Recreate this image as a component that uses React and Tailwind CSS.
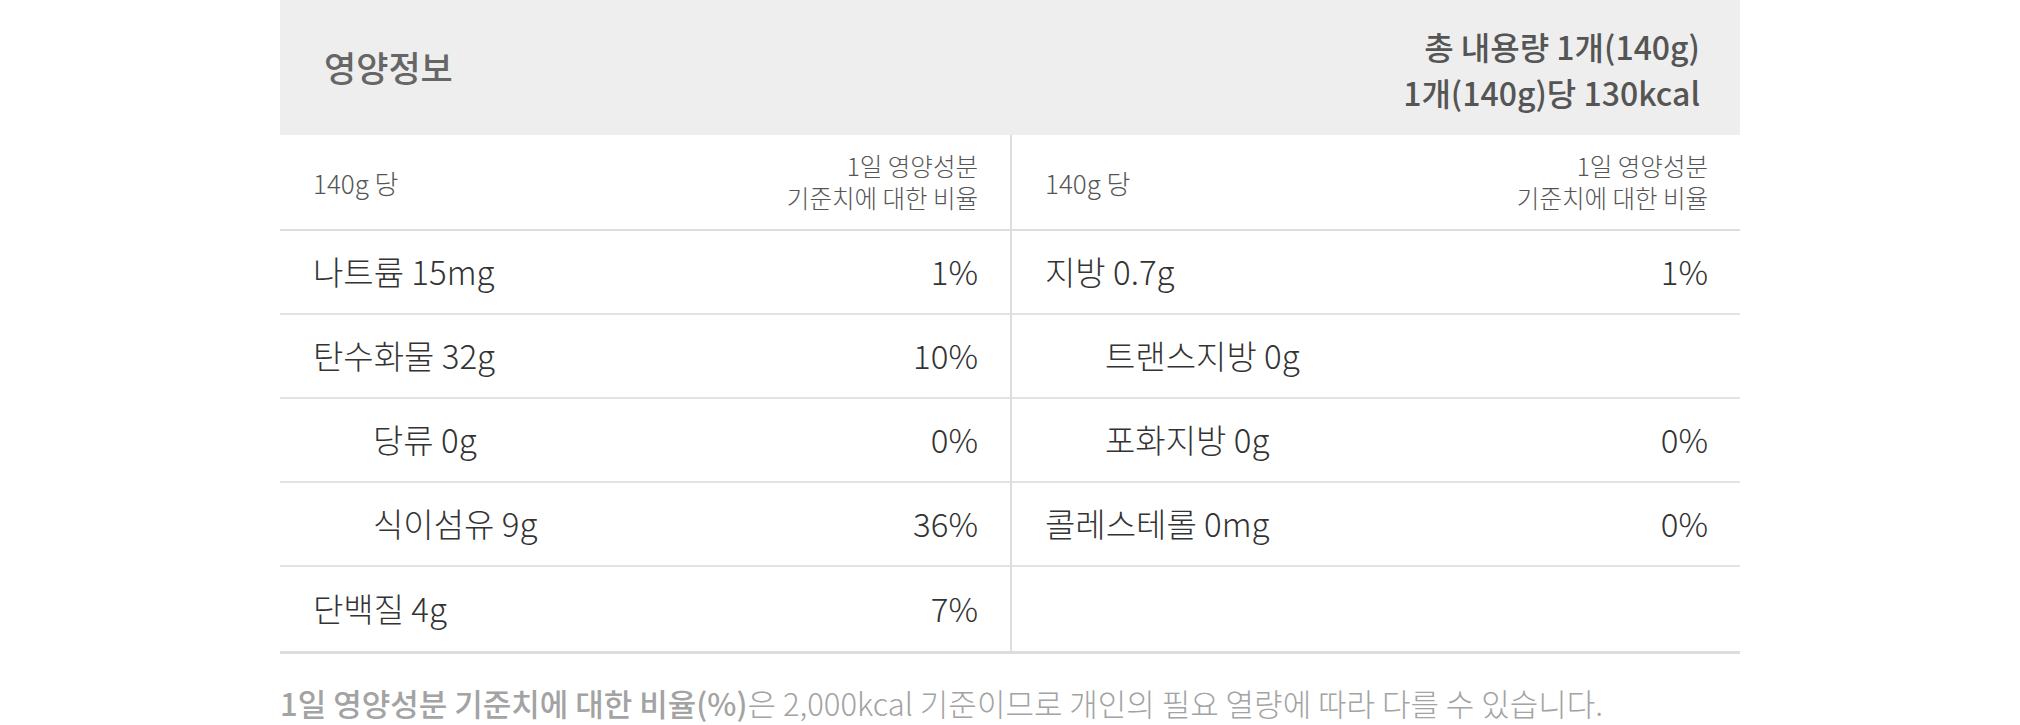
import React from 'react';

const leftRows = [
  { name: '나트륨 15mg', pct: '1%' },
  { name: '탄수화물 32g', pct: '10%' },
  { name: '당류 0g', pct: '0%', sub: true },
  { name: '식이섬유 9g', pct: '36%', sub: true },
  { name: '단백질 4g', pct: '7%' },
];

const rightRows = [
  { name: '지방 0.7g', pct: '1%' },
  { name: '트랜스지방 0g', pct: '', sub: true },
  { name: '포화지방 0g', pct: '0%', sub: true },
  { name: '콜레스테롤 0mg', pct: '0%' },
  { name: '', pct: '' },
];

// light face first, regular CJK as fallback
const light = "font-['Noto_Sans_CJK_KR_Light','Noto_Sans_CJK_KR',sans-serif] font-light";

const Column = ({ rows, divider }) => (
  <div className={divider ? 'flex flex-col border-l-2 border-[#dddddd]' : 'flex flex-col'}>
    {/* sub header */}
    <div className={`h-[96px] flex items-center justify-between pl-[33px] pr-[32px] border-b-2 border-[#dddddd] text-[#555555] ${light}`}>
      <span className="text-[26px]">140g 당</span>
      <span className="text-[24.5px] leading-[32px] text-right">
        1일 영양성분
        <br />
        기준치에 대한 비율
      </span>
    </div>
    {rows.map((row, i) => (
      <div
        key={i}
        className={`h-[84px] flex items-center justify-between pr-[32px] text-[33px] text-[#333333] ${light} ${
          row.sub ? 'pl-[93px]' : 'pl-[33px]'
        } ${i < rows.length - 1 ? 'border-b-2 border-[#e3e3e3]' : ''}`}
      >
        <span>{row.name}</span>
        <span>{row.pct}</span>
      </div>
    ))}
  </div>
);

export default function App() {
  return (
    <div className="min-h-screen bg-white font-['Noto_Sans_CJK_KR','Noto_Sans',sans-serif]">
      <div className="w-[1460px] mx-auto">
        {/* Header */}
        <div className="h-[135px] bg-[#eeeeee] flex items-center justify-between pl-[44px] pr-[40px]">
          <h2 className="text-[35px] font-medium text-[#666666]">영양정보</h2>
          <div className="text-right text-[32px] font-medium text-[#555555] leading-[46px] pt-[2px]">
            <p>총 내용량 1개(140g)</p>
            <p>1개(140g)당 130kcal</p>
          </div>
        </div>

        {/* Table */}
        <div className="grid grid-cols-2 border-b-[3px] border-[#dddddd]">
          <Column rows={leftRows} />
          <Column rows={rightRows} divider />
        </div>

        {/* Footer */}
        <p className="mt-[30px] text-[31px] leading-[38px] text-[#a3a3a3]">
          <span className="font-medium">1일 영양성분 기준치에 대한 비율(%)</span>
          <span className={light}>은 2,000kcal 기준이므로 개인의 필요 열량에 따라 다를 수 있습니다.</span>
        </p>
      </div>
    </div>
  );
}
